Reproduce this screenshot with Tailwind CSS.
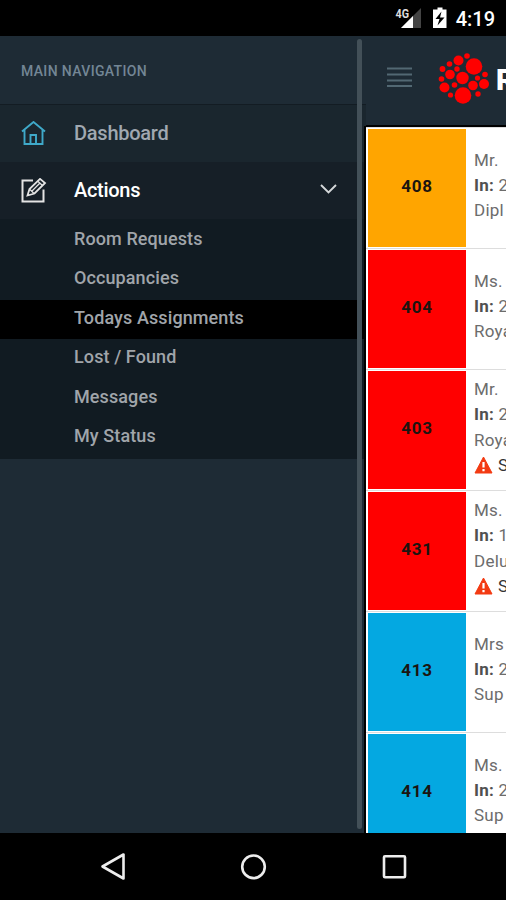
<!DOCTYPE html>
<html lang="en">
  <head>
    <meta charset="utf-8" />
    <meta name="viewport" content="width=device-width, initial-scale=1" />
    <title>Rooms</title>
    <script src="https://cdn.jsdelivr.net/npm/@tailwindcss/browser@4"></script>
  </head>
  <body class="bg-black font-['Roboto',sans-serif]">
    <div class="flex h-[900px] w-[506px] flex-col overflow-hidden bg-black">

      <!-- status bar -->
      <div class="flex h-9 shrink-0 items-center justify-end pr-[11px] text-white">
        <svg class="h-9 w-[56px]" viewBox="0 0 56 36">
          <text x="0.500" y="17.500" font-size="12.500" font-weight="700" fill="#ddd" textLength="13.500" lengthAdjust="spacingAndGlyphs">4G</text>
          <path d="M26 8V28H6Z" fill="#444" />
          <path d="M18 16V28H6Z" fill="#fff" />
          <path d="M39 9.500h3.500v-2h5v2h4v18.500h-13.500v-18.500z" fill="#fff" />
          <path d="M46.500 11.500l-6 7.500h4l-2 6.500 7-8h-4.500z" fill="#000" />
        </svg>
        <span class="ml-[5px] pt-[3px] text-[20px] leading-[33px] font-medium">4:19</span>
      </div>

      <div class="flex h-[797px] shrink-0 overflow-hidden bg-[#1e2b35]">

        <!-- sidebar -->
        <div class="relative w-[366px] shrink-0">
          <div class="flex h-[68px] items-center pt-[3px] pl-[21px] text-[14px] font-medium tracking-[0.35px] text-[#738695]">MAIN NAVIGATION</div>
          <div class="flex h-[58px] items-center border-t border-[#131c23] bg-[#1a262e] pl-[21px]">
            <svg class="h-[26px] w-[26px]" viewBox="0 0 26 26" fill="none" stroke="#3fa9c9" stroke-width="1.900">
              <path d="M1 10.500L12.500 1L24 10.500M3.500 9V23H9.500V14H15V23H21.500V9M9.500 23H15" />
            </svg>
            <span class="ml-[27px] pb-[2px] text-[20px] font-medium tracking-[-0.25px] text-[#a0a8b1]">Dashboard</span>
          </div>
          <div class="flex h-[57px] items-center bg-[#161f27] pl-[21px]">
            <svg class="h-[26px] w-[26px]" viewBox="0 0 26 26" fill="none" stroke="#e4e4e4" stroke-width="2">
              <path d="M12 2.500H1.500V23.500H22.500V11.500" />
              <path d="M6.500 17.500L8.500 11L19 0.900L24 5L13.500 15.500Z" stroke-width="1.800" />
              <path d="M16.500 3L21.500 7.500M9 11.500L13 15.500M10.500 13.500L19 5" stroke-width="1.300" />
            </svg>
            <span class="ml-[27px] pb-[1px] text-[20px] font-medium tracking-[-0.3px] text-white">Actions</span>
            <svg class="ml-[180px] mb-[4px] h-[10px] w-[17px]" viewBox="0 0 17 10" fill="none" stroke="#d5d8da" stroke-width="1.900"><path d="M1 1L8.500 8.500L16 1" /></svg>
          </div>
          <ul class="bg-[#111b22] pt-[2px] text-[18px] leading-[35.6px] font-medium tracking-[0.1px] text-[#a0a5aa] *:h-[39.4px] *:pl-[74px]">
            <li>Room Requests</li>
            <li>Occupancies</li>
            <li class="bg-black">Todays Assignments</li>
            <li>Lost / Found</li>
            <li>Messages</li>
            <li>My Status</li>
            <li class="!h-[2px]"></li>
          </ul>
          <div class="absolute top-[3px] left-[357px] h-[790px] w-[5px] rounded-sm bg-[#435058]"></div>
          <div class="absolute top-[90px] left-[364px] h-[707px] w-[2px] bg-black"></div>
        </div>

        <!-- page -->
        <div class="w-[140px] shrink-0 overflow-hidden">
          <div class="flex h-[91px] border-b-2 border-black">
            <svg class="h-[88px] w-[128px] shrink-0" viewBox="366 36 128 88">
              <path d="M387 68.500H412M387 74.500H412M387 80.500H412M387 86H412" stroke="#526873" stroke-width="2" />
              <g fill="#f00">
                <circle cx="474" cy="66.500" r="8.300" />
                <circle cx="458.500" cy="60.500" r="5" />
                <circle cx="467" cy="56" r="2.800" />
                <circle cx="449.500" cy="64" r="2.800" />
                <circle cx="442.500" cy="69" r="2.900" />
                <circle cx="457" cy="69" r="2.700" />
                <circle cx="450" cy="74.500" r="4.800" />
                <circle cx="462.500" cy="78" r="6.200" />
                <circle cx="441.500" cy="79" r="2.800" />
                <circle cx="444.500" cy="87.500" r="5" />
                <circle cx="454.500" cy="85" r="2.800" />
                <circle cx="463" cy="95.500" r="8.300" />
                <circle cx="450.500" cy="95" r="2.600" />
                <circle cx="478" cy="94" r="2.700" />
                <circle cx="473" cy="85.500" r="4.800" />
                <circle cx="484" cy="84" r="5" />
                <circle cx="477.500" cy="78" r="2.600" />
                <circle cx="485" cy="74.500" r="2.800" />
              </g>
            </svg>
            <span class="ml-[2px] pt-[2px] text-[29px] leading-[84px] font-black text-white">R</span>
          </div>
          <div class="h-[706px] overflow-hidden bg-white" id="rooms"></div>
        </div>
      </div>

      <!-- android buttons -->
      <div class="h-[67px] shrink-0">
        <svg class="h-[67px] w-[506px]" viewBox="0 833 506 67" fill="none" stroke="#ededed" stroke-width="2.600">
          <path d="M102.500 866.500L123.500 854.500V878.500Z" stroke-linejoin="round" />
          <circle cx="253.500" cy="866.800" r="11.300" />
          <rect x="384" y="856.200" width="21" height="21" rx="1" />
        </svg>
      </div>
    </div>

    <script>
      const rooms = [
        { no: '408', color: 'bg-[#ffa500]', name: 'Mr.', date: '2', type: 'Dipl' },
        { no: '404', color: 'bg-[#ff0000]', name: 'Ms.', date: '2', type: 'Roya' },
        { no: '403', color: 'bg-[#ff0000]', name: 'Mr.', date: '2', type: 'Roya', alert: true },
        { no: '431', color: 'bg-[#ff0000]', name: 'Ms.', date: '1', type: 'Delu', alert: true },
        { no: '413', color: 'bg-[#04a8e1]', name: 'Mrs', date: '2', type: 'Sup' },
        { no: '414', color: 'bg-[#04a8e1]', name: 'Ms.', date: '2', type: 'Sup' },
      ]

      document.getElementById('rooms').innerHTML = rooms.map(room => `
        <div class="flex h-[121px] w-[200px] border-t border-[#ddd] pl-[2px]">
          <div class="mt-px mb-px flex w-[98px] items-center justify-center pb-[3px] text-[17px] font-bold tracking-[0.8px] text-[#1b1410] ${room.color}">${room.no}</div>
          <div class="flex flex-col justify-center pb-[5px] pl-[8px] text-[17px] leading-[25.3px] tracking-[0.25px] whitespace-nowrap text-[#6c6c6c]">
            <div>${room.name}</div>
            <div><b class="font-bold text-[#505050]">In:</b> ${room.date}</div>
            <div>${room.type}</div>
            ${room.alert ? `<div class="flex items-center text-[#333]">
              <svg class="mr-[5px] h-[18px] w-[19px]" viewBox="0 0 19 18"><path d="M9.500 1L18 17H1Z" fill="#f33a12" stroke="#f33a12" stroke-linejoin="round" /><path d="M9.500 6v5.500M9.500 13v2.200" stroke="#fff" stroke-width="2.200" /></svg>S
            </div>` : ''}
          </div>
        </div>`).join('')
    </script>
  </body>
</html>
